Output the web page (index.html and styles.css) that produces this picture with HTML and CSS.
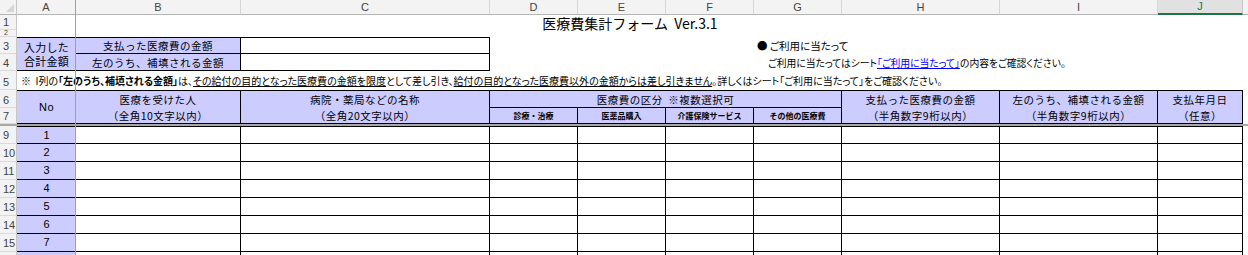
FILE: index.html
```html
<!DOCTYPE html>
<html lang="ja">
<head>
<meta charset="utf-8">
<title>医療費集計フォーム</title>
<link rel="stylesheet" href="styles.css">
</head>
<body>
<div class="sheet">
  <div class="grid colbar">
    <div class="corner"><span class="tri"></span></div>
    <div class="colhead">A</div>
    <div class="colhead">B</div>
    <div class="colhead">C</div>
    <div class="colhead">D</div>
    <div class="colhead">E</div>
    <div class="colhead">F</div>
    <div class="colhead">G</div>
    <div class="colhead">H</div>
    <div class="colhead">I</div>
    <div class="colhead sel">J</div>
    <div class="colhead rest"></div>
  </div>

  <div class="grid top">
    <div class="rowhead rh1">1</div>
    <div class="rowhead rh2">2</div>
    <div class="rowhead rh3">3</div>
    <div class="rowhead rh4">4</div>
    <div class="rowhead rh5">5</div>
    <div class="rowhead rh6">6</div>
    <div class="rowhead rh7">7</div>

    <div class="title">医療費集計フォーム&nbsp;&nbsp;Ver.3.1</div>

    <div class="cell lav hd total">入力した<br>合計金額</div>
    <div class="cell lav hd b3">支払った医療費の金額</div>
    <div class="cell lav hd b4">左のうち、補填される金額</div>
    <div class="cell c3"></div>
    <div class="cell c4"></div>

    <div class="note n1">●&nbsp;ご利用に当たって</div>
    <div class="note n2">ご利用に当たってはシート<a class="link" href="#">「ご利用に当たって」</a>の内容をご確認ください。</div>

    <div class="remark">※&nbsp;&nbsp;I列の<b>「左のうち、補填される金額」</b>は、<u>その給付の目的となった医療費の金額を限度</u>として差し引き、<u>給付の目的となった医療費以外の金額からは差し引きません</u>。詳しくはシート「ご利用に当たって」をご確認ください。</div>

    <div class="cell lav hd no">No</div>
    <div class="cell lav hd h6 cB">医療を受けた人</div>
    <div class="cell lav hd h7 cB">（全角10文字以内）</div>
    <div class="cell lav hd h6 cC">病院・薬局などの名称</div>
    <div class="cell lav hd h7 cC">（全角20文字以内）</div>
    <div class="cell lav hd kubun">医療費の区分&nbsp;&nbsp;※複数選択可</div>
    <div class="cell lav sm h7 cD">診療・治療</div>
    <div class="cell lav sm h7 cE">医薬品購入</div>
    <div class="cell lav sm h7 cF">介護保険サービス</div>
    <div class="cell lav sm h7 cG">その他の医療費</div>
    <div class="cell lav hd h6 cH">支払った医療費の金額</div>
    <div class="cell lav hd h7 cH">（半角数字9桁以内）</div>
    <div class="cell lav hd h6 cI">左のうち、補填される金額</div>
    <div class="cell lav hd h7 cI">（半角数字9桁以内）</div>
    <div class="cell lav hd h6 cJ">支払年月日</div>
    <div class="cell lav hd h7 cJ">（任意）</div>
  </div>

  <div class="freeze"></div>

  <div class="grid data">
    <div class="rowhead">9</div><div class="cell lav num first">1</div><div class="cell d first"></div><div class="cell d first"></div><div class="cell d first"></div><div class="cell d first"></div><div class="cell d first"></div><div class="cell d first"></div><div class="cell d first"></div><div class="cell d first"></div><div class="cell d first"></div><div class="blank"></div>
    <div class="rowhead">10</div><div class="cell lav num">2</div><div class="cell d"></div><div class="cell d"></div><div class="cell d"></div><div class="cell d"></div><div class="cell d"></div><div class="cell d"></div><div class="cell d"></div><div class="cell d"></div><div class="cell d"></div><div class="blank"></div>
    <div class="rowhead">11</div><div class="cell lav num">3</div><div class="cell d"></div><div class="cell d"></div><div class="cell d"></div><div class="cell d"></div><div class="cell d"></div><div class="cell d"></div><div class="cell d"></div><div class="cell d"></div><div class="cell d"></div><div class="blank"></div>
    <div class="rowhead">12</div><div class="cell lav num">4</div><div class="cell d"></div><div class="cell d"></div><div class="cell d"></div><div class="cell d"></div><div class="cell d"></div><div class="cell d"></div><div class="cell d"></div><div class="cell d"></div><div class="cell d"></div><div class="blank"></div>
    <div class="rowhead">13</div><div class="cell lav num">5</div><div class="cell d"></div><div class="cell d"></div><div class="cell d"></div><div class="cell d"></div><div class="cell d"></div><div class="cell d"></div><div class="cell d"></div><div class="cell d"></div><div class="cell d"></div><div class="blank"></div>
    <div class="rowhead">14</div><div class="cell lav num">6</div><div class="cell d"></div><div class="cell d"></div><div class="cell d"></div><div class="cell d"></div><div class="cell d"></div><div class="cell d"></div><div class="cell d"></div><div class="cell d"></div><div class="cell d"></div><div class="blank"></div>
    <div class="rowhead">15</div><div class="cell lav num">7</div><div class="cell d"></div><div class="cell d"></div><div class="cell d"></div><div class="cell d"></div><div class="cell d"></div><div class="cell d"></div><div class="cell d"></div><div class="cell d"></div><div class="cell d"></div><div class="blank"></div>
    <div class="rowhead"></div><div class="cell lav num"></div><div class="cell d"></div><div class="cell d"></div><div class="cell d"></div><div class="cell d"></div><div class="cell d"></div><div class="cell d"></div><div class="cell d"></div><div class="cell d"></div><div class="cell d"></div><div class="blank"></div>
  </div>

  <div class="freeze-v"></div>
</div>
</body>
</html>
```

FILE: styles.css
```css
html, body {
  margin: 0;
  padding: 0;
  background: #fff;
  overflow: hidden;
}
body {
  font-family: "Noto Sans CJK JP", "Noto Sans", sans-serif;
  color: #000;
}
.sheet {
  position: relative;
  width: 1248px;
  height: 255px;
  overflow: hidden;
}
.grid {
  display: grid;
  grid-template-columns: 17px 59px 165px 249px 88px 88px 88px 88px 158px 158px 85px 1fr;
}
.grid > div {
  box-sizing: border-box;
  min-width: 0;
}

/* column header bar */
.colbar {
  grid-template-rows: 15px;
}
.corner {
  position: relative;
  background: #f3f3f3;
  border-right: 1px solid #c6c6c6;
  border-bottom: 1px solid #b5b5b5;
}
.tri {
  position: absolute;
  right: 2px;
  bottom: 2px;
  width: 0;
  height: 0;
  border-left: 8px solid transparent;
  border-bottom: 8px solid #d6d6d6;
}
.colhead {
  background: #f3f3f3;
  border-right: 1px solid #d6d6d6;
  border-bottom: 1px solid #b5b5b5;
  font-family: "Liberation Sans", "Noto Sans", sans-serif;
  font-size: 11px;
  color: #444;
  display: flex;
  align-items: center;
  justify-content: center;
  line-height: 1;
}
.colhead.sel {
  background: #e1e1e1;
  color: #217346;
  border-bottom: 2px solid #217346;
  border-right: 1px solid #c6c6c6;
}
.colhead.rest {
  border-right: none;
}

/* row headers */
.rowhead {
  background: #f3f3f3;
  border-right: 1px solid #c6c6c6;
  border-bottom: 1px solid #dadada;
  font-family: "Liberation Sans", "Noto Sans", sans-serif;
  font-size: 11px;
  color: #444;
  display: flex;
  align-items: flex-end;
  padding: 0 0 1px 3px;
  line-height: 1;
  overflow: hidden;
  grid-column: 1;
}
.top .rh1 { grid-row: 1; }
.top .rh2 {
  grid-row: 2;
  font-size: 7px;
  padding-bottom: 0;
  padding-left: 4px;
}
.top .rh3 { grid-row: 3; }
.top .rh4 { grid-row: 4; }
.top .rh5 { grid-row: 5; }
.top .rh6 { grid-row: 6; }
.top .rh7 { grid-row: 7; }

/* top (frozen) area */
.top {
  grid-template-rows: 15px 7px 17px 17px 19px 18px 16px;
}
.title {
  grid-column: 2 / 12;
  grid-row: 1 / 3;
  display: flex;
  justify-content: center;
  align-items: flex-start;
  font-size: 14px;
  line-height: 16px;
  white-space: nowrap;
}
.cell {
  display: flex;
  align-items: center;
  justify-content: center;
  white-space: nowrap;
  overflow: hidden;
}
.lav {
  background: #ccccff;
}
.hd {
  font-size: 10.5px;
  letter-spacing: 0.5px;
  line-height: 15px;
}
.sm {
  font-size: 8px;
  font-weight: 700;
  letter-spacing: 0;
}
.total {
  grid-column: 2;
  grid-row: 3 / 5;
  border-top: 1px solid #000;
  border-bottom: 1px solid #000;
  white-space: normal;
  text-align: center;
  line-height: 14px;
  font-size: 11px;
  letter-spacing: 0.3px;
}
.b3 {
  grid-column: 3;
  grid-row: 3;
  border-top: 1px solid #000;
  border-bottom: 1px solid #000;
  border-right: 1px solid #000;
}
.b4 {
  grid-column: 3;
  grid-row: 4;
  border-bottom: 1px solid #000;
  border-right: 1px solid #000;
}
.c3 {
  grid-column: 4;
  grid-row: 3;
  border-top: 1px solid #000;
  border-bottom: 1px solid #000;
  border-right: 1px solid #000;
}
.c4 {
  grid-column: 4;
  grid-row: 4;
  border-bottom: 1px solid #000;
  border-right: 1px solid #000;
}
.note {
  grid-column: 8 / 12;
  font-feature-settings: "palt";
  white-space: nowrap;
  display: flex;
  align-items: center;
}
.n1 {
  grid-row: 3;
  font-size: 10.5px;
  padding-left: 3px;
}
.n2 {
  grid-row: 4;
  font-size: 9.8px;
  padding-left: 14px;
}
.link {
  color: #0000ff;
  text-decoration: underline;
}
.remark {
  grid-column: 2 / 12;
  grid-row: 5;
  font-size: 10px;
  font-feature-settings: "palt";
  white-space: nowrap;
  display: flex;
  align-items: center;
  padding-left: 4px;
}
.remark b {
  font-weight: 700;
}
.no {
  grid-column: 2;
  grid-row: 6 / 8;
  border-top: 1px solid #000;
  border-bottom: 1px solid #000;
  font-family: "Liberation Sans", "Noto Sans", sans-serif;
  font-size: 11px;
}
.h6 {
  grid-row: 6;
  border-top: 1px solid #000;
  border-right: 1px solid #000;
}
.h7 {
  grid-row: 7;
  border-bottom: 1px solid #000;
  border-right: 1px solid #000;
}
.kubun {
  grid-column: 5 / 9;
  grid-row: 6;
  border-top: 1px solid #000;
  border-right: 1px solid #000;
  border-bottom: 1px solid #000;
}
.cB { grid-column: 3; }
.cC { grid-column: 4; }
.cD { grid-column: 5; }
.cE { grid-column: 6; }
.cF { grid-column: 7; }
.cG { grid-column: 8; }
.cH { grid-column: 9; }
.cI { grid-column: 10; }
.cJ { grid-column: 11; }

/* freeze line */
.freeze {
  height: 2px;
  background: #a8a8a8;
}
.freeze-v {
  position: absolute;
  left: 75px;
  top: 0;
  bottom: 0;
  width: 1px;
  background: #a0a0a0;
}

/* data rows */
.data {
  grid-auto-rows: 18px;
}
.data .rowhead {
  padding-bottom: 2px;
}
.d {
  border-right: 1px solid #000;
  border-bottom: 1px solid #000;
}
.num {
  border-bottom: 1px solid #000;
  font-family: "Liberation Sans", "Noto Sans", sans-serif;
  font-size: 11px;
  padding-bottom: 1px;
}
.first {
  border-top: 1px solid #000;
}
.blank {
  background: #fff;
}
```
